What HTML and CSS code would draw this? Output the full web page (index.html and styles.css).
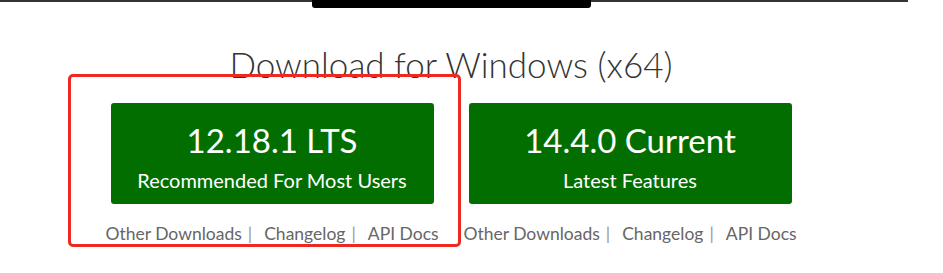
FILE: index.html
```html
<!DOCTYPE html>
<html lang="en">
<head>
    <meta charset="UTF-8">
    <title>Download</title>
    <link rel="stylesheet" href="styles.css">
</head>
<body>
<div class="topbar">
    <div class="tab"></div>
</div>

<section class="download">
    <h2>Download for Windows (x64)</h2>
    <div class="options">
        <div class="option">
            <a class="button" href="#">
                <span class="version">12.18.1 LTS</span>
                <span class="note">Recommended For Most Users</span>
            </a>
            <ul class="links">
                <li><a href="#">Other Downloads</a></li>
                <li><a href="#">Changelog</a></li>
                <li><a href="#">API Docs</a></li>
            </ul>
            <div class="highlight"></div>
        </div>
        <div class="option">
            <a class="button" href="#">
                <span class="version">14.4.0 Current</span>
                <span class="note">Latest Features</span>
            </a>
            <ul class="links">
                <li><a href="#">Other Downloads</a></li>
                <li><a href="#">Changelog</a></li>
                <li><a href="#">API Docs</a></li>
            </ul>
        </div>
    </div>
</section>
</body>
</html>
```

FILE: styles.css
```css
* {
    margin: 0;
    padding: 0;
    box-sizing: border-box;
}

body {
    min-height: 273px;
    background: #fff;
    font-family: 'Lato', sans-serif;
    color: #333;
}

.topbar {
    width: 908px;
    height: 2px;
    background: #333;
    display: flex;
    justify-content: center;
}

.topbar .tab {
    width: 279px;
    height: 8px;
    background: #000;
    border-radius: 0 0 3px 3px;
    position: relative;
    left: -3px;
}

.download {
    width: 902px;
    padding: 38px 0 30px;
    text-align: center;
}

.download h2 {
    font-weight: 300;
    font-size: 35px;
    line-height: 48px;
    color: #333;
}

.options {
    display: flex;
    justify-content: center;
    gap: 35px;
    margin-top: 15px;
}

.option {
    position: relative;
    width: 323px;
    display: flex;
    flex-direction: column;
    align-items: center;
}

.button {
    width: 323px;
    height: 101px;
    background: #026e00;
    border-radius: 3px;
    color: #fff;
    text-decoration: none;
    display: flex;
    flex-direction: column;
    align-items: center;
    padding-top: 17px;
}

.button .version {
    font-size: 33px;
    line-height: 40px;
}

.button .note {
    font-size: 20px;
    line-height: 24px;
    margin-top: 8px;
}

.links {
    list-style: none;
    display: flex;
    white-space: nowrap;
    margin-top: 19px;
    font-size: 17.5px;
    line-height: 22px;
}

.links li + li::before {
    content: '|';
    color: #999;
    margin: 0 12px 0 6px;
}

.links a {
    color: #666;
    text-decoration: none;
}

.highlight {
    position: absolute;
    left: -43px;
    top: -29px;
    width: 393px;
    height: 173px;
    border: 3px solid #ec2a22;
    border-radius: 5px;
    pointer-events: none;
}
```
